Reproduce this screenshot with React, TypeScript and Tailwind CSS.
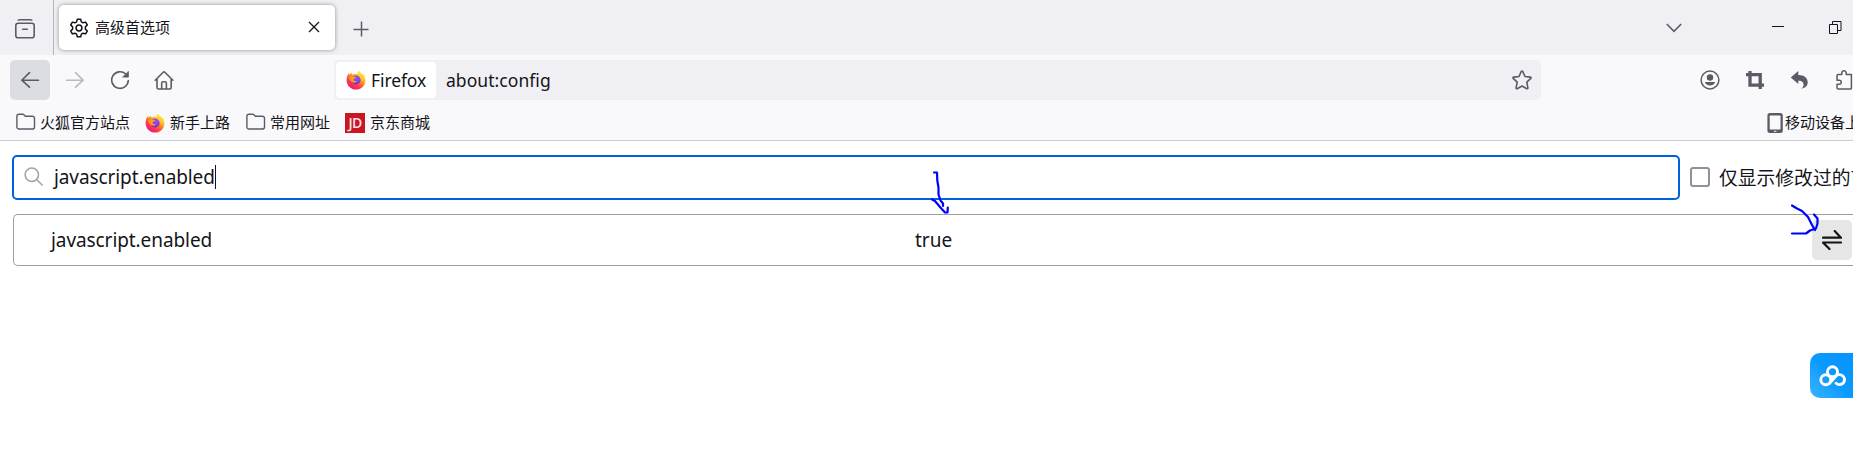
import React from "react";

type IconProps = { className?: string };

const latin = "font-['Noto_Sans','Noto_Sans_CJK_SC',sans-serif]";
const cjk = "font-['Noto_Sans_CJK_SC',sans-serif]";

function FirefoxLogo({ id }: { id: string }) {
  return (
    <svg viewBox="0 0 20 20" className="size-5 shrink-0">
      <defs>
        <linearGradient id={id + "a"} x1="0.85" y1="0.05" x2="0.25" y2="0.95">
          <stop offset="0.05" stopColor="#fff44f" />
          <stop offset="0.3" stopColor="#ffc52e" />
          <stop offset="0.52" stopColor="#ff7a22" />
          <stop offset="0.75" stopColor="#ff3750" />
          <stop offset="1" stopColor="#f0147c" />
        </linearGradient>
        <radialGradient id={id + "b"} cx="0.6" cy="0.3" r="0.75">
          <stop offset="0" stopColor="#a64bf4" />
          <stop offset="0.6" stopColor="#7542e5" />
          <stop offset="1" stopColor="#592acb" />
        </radialGradient>
      </defs>
      <path fill={"url(#" + id + "a)"} d="M13.2.6c-1.2.9-1.7 2.100-1.600 3.400C9.700 3.700 8 3.900 6.600 4.600 6 4.200 5.700 3.500 5.700 2.800 4.800 3.300 4.200 3.900 3.800 4.500 3.200 4.300 2.800 3.800 2.600 3.200 1.300 4.800.5 7.700.6 10.500.9 15.700 5 19.600 10 19.600c5.300 0 9.500-4.200 9.500-9.400 0-2.900-1.200-5.200-2.900-6.700.1.7.2 1.200.1 1.600C15.800 3.100 14 2.400 13.200.6z" />
      <circle cx="10.2" cy="10" r="4.400" fill={"url(#" + id + "b)"} />
      <path fill="#ff9a24" d="M3.400 7.200c1.500-1.200 3.100-1.300 4.300-.5 1 .1 2 .1 2.500.3-.2 1-1.100 1.500-2.100 1.900-.7.400-.5 1.200.1 1.800.8.700 1.900.5 3 .2-.7 1.500-2.400 2.200-4.100 1.700C4.700 11.900 3.200 9.700 3.400 7.200z" />
      <path fill="#ffca32" d="M12.100 4.200c3.200 1.300 4.500 4.300 3.500 7.100 1.700-1.200 2.100-3.700 1-5.900-1.200-1.200-2.500-1.800-4.500-1.200z" />
    </svg>
  );
}

function Folder() {
  return (
    <svg viewBox="0 0 20 20" className="mt-[-1px] size-5 shrink-0" fill="none" stroke="#5b5b66" strokeWidth="1.4">
      <path d="M.9 14.900V4.300a2.100 2.100 0 0 1 2.100-2.100h3.700c.5 0 .9.200 1.200.5l1.500 1.500h7a2.100 2.100 0 0 1 2.100 2.100v8.600a2.100 2.100 0 0 1-2.100 2.100H3a2.100 2.100 0 0 1-2.100-2.100z" />
    </svg>
  );
}

function Gear({ className }: IconProps) {
  return (
    <svg viewBox="0 0 20 20" className={className} fill="none" stroke="#15141a" strokeWidth="1.500" strokeLinejoin="round">
      <circle cx="10" cy="10" r="2.900" />
      <path d="M8.300 1.300h3.400l.7 2.600 1.600.9 2.600-.7 1.700 2.900-1.900 1.900v2.200l1.900 1.900-1.700 2.900-2.600-.7-1.600.9-.7 2.600H8.300l-.7-2.600-1.600-.9-2.600.7L1.700 13l1.900-1.900V8.900L1.700 7l1.700-2.900 2.600.7 1.600-.9z" />
    </svg>
  );
}

function TabBar() {
  return (
    <header className="flex h-[55px] items-center bg-[#f0f0f4]">
      <div className="flex h-full w-[54px] shrink-0 items-center border-r border-[#b5b5bb] pl-[15px]">
        <svg viewBox="0 0 20 20" className="mt-[2px] size-5" fill="none" stroke="#5b5b66" strokeWidth="1.600" strokeLinecap="round">
          <path d="M3.200 1.100C3.600.9 4.100.8 4.600.8h10.800c.5 0 1 .1 1.400.3" />
          <rect x=".8" y="4.300" width="18.400" height="14.500" rx="2.300" />
          <path d="M7.700 10.300h4.600" />
        </svg>
      </div>
      <div className="ml-[5px] flex h-[45px] w-[276px] items-center rounded-[5px] bg-white pl-[10px] shadow-[0_0_4px_rgba(0,0,0,0.4)]">
        <Gear className="size-5 shrink-0" />
        <span className={cjk + " mt-[-2px] ml-[6px] text-[15px] leading-5 text-[#15141a]"}>高级首选项</span>
        <svg viewBox="0 0 12 12" className="mt-[-1px] mr-[15px] ml-auto size-3" stroke="#15141a" strokeWidth="1.300">
          <path d="M1 1l10 10M11 1L1 11" />
        </svg>
      </div>
      <svg viewBox="0 0 16 16" className="mt-[2px] ml-[18px] size-4" stroke="#5b5b66" strokeWidth="1.500">
        <path d="M8.500 .5v15M.5 8.500h15" />
      </svg>
      <svg viewBox="0 0 16 10" className="mr-[90px] ml-auto h-[10px] w-4" fill="none" stroke="#5b5b66" strokeWidth="1.600">
        <path d="M.8 1L8 8.400 15.200 1" />
      </svg>
      <svg viewBox="0 0 12 2" className="mr-[45px] mb-[2px] h-[2px] w-3" fill="#15141a">
        <rect y="0" width="12" height="1" />
      </svg>
      <svg viewBox="0 0 13 13" className="mr-[11px] size-[13px]" fill="none" stroke="#15141a" strokeWidth="1">
        <path d="M.5 3.500h8v9h-8zM3.500 3.500v-3h8.500v9H8.500" />
      </svg>
    </header>
  );
}

function NavBar() {
  return (
    <nav className="flex h-[50px] items-center pl-[10px]">
      <div className="flex size-10 shrink-0 items-center justify-center rounded-[5px] bg-[#dcdce3]">
        <svg viewBox="0 0 20 20" className="size-5" fill="none" stroke="#5b5b66" strokeWidth="1.600" strokeLinecap="round" strokeLinejoin="round">
          <path d="M18.500 10.200H1.800M9.500 2.600L1.800 10.200l7.700 7" />
        </svg>
      </div>
      <svg viewBox="0 0 20 20" className="ml-[15px] size-5 shrink-0" fill="none" stroke="#b9b9bf" strokeWidth="1.600" strokeLinecap="round" strokeLinejoin="round">
        <path d="M1.500 10.200h16.700M10.500 2.600l7.700 7.600-7.700 7" />
      </svg>
      <svg viewBox="0 0 20 20" className="ml-[25px] size-5 shrink-0" fill="none" stroke="#5b5b66" strokeWidth="1.600" strokeLinecap="round">
        <path d="M18.300 10.500a8.300 8.300 0 1 1-2.600-6.500" />
        <path d="M18.400 1.700v5.400H13z" fill="#5b5b66" strokeWidth=".8" strokeLinejoin="round" />
      </svg>
      <svg viewBox="0 0 20 20" className="ml-[24px] size-5 shrink-0" fill="none" stroke="#5b5b66" strokeWidth="1.600" strokeLinecap="round" strokeLinejoin="round">
        <path d="M1.200 10.200l8-8c.5-.5 1.200-.5 1.700 0l8 8M3 8.800v8.600c0 .9.700 1.600 1.600 1.600h11c.9 0 1.600-.7 1.600-1.600V8.800M7.700 18.800v-5.600c0-.9.600-1.500 1.500-1.500h1.700c.9 0 1.500.6 1.500 1.500v5.600" />
      </svg>
      <div className="ml-[160px] flex h-10 w-[1207px] shrink-0 items-center rounded-[5px] bg-[#f0f0f4] p-[2px]">
        <div className="flex h-9 w-[100px] items-center rounded-[4px] bg-white pl-[10px]">
          <FirefoxLogo id="nav" />
          <span className={latin + " ml-[5px] text-[17.500px] leading-6 tracking-[-0.1px] text-[#15141a]"}>Firefox</span>
        </div>
        <span className={latin + " ml-[10px] text-[17.500px] leading-6 tracking-[0.05px] text-[#15141a]"}>about:config</span>
        <svg viewBox="0 0 20 20" className="mr-[7px] ml-auto size-5" fill="none" stroke="#5b5b66" strokeWidth="1.600" strokeLinejoin="round">
          <path d="M9.300 1.400c.3-.6 1.100-.6 1.400 0l2.300 5.100 5.300.6c.7.100.9.800.5 1.300l-4 3.800 1.100 5.700c.1.700-.5 1.100-1.100.8L10 16l-4.800 2.700c-.6.300-1.200-.1-1.100-.8l1.100-5.700-4-3.800c-.4-.5-.2-1.200.5-1.300L7 6.500z" />
        </svg>
      </div>
    </nav>
  );
}

function ToolbarButtons() {
  return (
    <div className="flex h-[50px] items-center gap-[25px]">
      <svg viewBox="0 0 20 20" className="size-5 shrink-0" fill="#5b5b66">
        <circle cx="10" cy="10" r="8.900" fill="none" stroke="#5b5b66" strokeWidth="1.500" />
        <circle cx="10" cy="7.500" r="3.200" />
        <path d="M4.900 12h10.200c-.5 2.100-2.500 3.600-5.100 3.600S5.400 14.100 4.900 12z" />
      </svg>
      <svg viewBox="0 0 20 20" className="size-5 shrink-0" fill="none" stroke="#5b5b66" strokeWidth="3.300">
        <path d="M1 4.700h14.200v14.300M5 1v14.100h14" />
      </svg>
      <svg viewBox="0 0 20 20" className="size-5 shrink-0" fill="#5b5b66">
        <path d="M.8 7.500L8.300 1v4c5.800.1 9.300 2.500 9.400 7.300.1 3.200-2.200 5.700-6.400 6.500 2.500-2 3-4.500 1.700-6.300-1-1.300-2.600-1.700-4.700-1.700V14z" />
      </svg>
      <svg viewBox="0 0 20 20" className="size-5 shrink-0" fill="none" stroke="#5b5b66" strokeWidth="1.500" strokeLinejoin="round">
        <path d="M3.200 4.600h3.600V3a2.200 2.200 0 0 1 4.400 0v1.600h5.200v13.700c0 .5-.3.700-.7.700H3.200c-.8 0-1.200-.4-1.200-1.200v-3.600h2.200a2 2 0 0 0 0-4H2V5.800c0-.8.400-1.200 1.200-1.200z" />
      </svg>
    </div>
  );
}

function BookmarkLabel({ children }: { children: React.ReactNode }) {
  return <span className={cjk + " mt-[-2px] text-[15px] leading-5 text-[#15141a]"}>{children}</span>;
}

function BookmarkBar() {
  return (
    <div className="flex h-[35px] items-center pl-4">
      <div className="flex w-[129px] shrink-0 items-center gap-1">
        <Folder />
        <BookmarkLabel>火狐官方站点</BookmarkLabel>
      </div>
      <div className="flex w-[101px] shrink-0 items-center gap-[5px]">
        <FirefoxLogo id="bookmark" />
        <BookmarkLabel>新手上路</BookmarkLabel>
      </div>
      <div className="flex w-[99px] shrink-0 items-center gap-1">
        <Folder />
        <BookmarkLabel>常用网址</BookmarkLabel>
      </div>
      <div className="flex shrink-0 items-center gap-[5px]">
        <span className="flex size-5 items-center justify-center bg-[#ca1623] pt-[1px] font-['Open_Sans',sans-serif] text-[14px] leading-[18px] font-semibold tracking-[-0.8px] text-[#fbe3e5]">JD</span>
        <BookmarkLabel>京东商城</BookmarkLabel>
      </div>
      <div className="ml-auto flex w-[88px] shrink-0 items-center whitespace-nowrap">
        <svg viewBox="0 0 20 20" className="size-5 shrink-0">
          <rect x="2.400" y="0" width="15.400" height="20" rx="2.500" fill="#5b5b66" />
          <rect x="4.700" y="2.600" width="10.800" height="13.900" rx=".7" fill="#f9f9fb" />
          <rect x="8.800" y="17.700" width="2.700" height="1.300" rx=".5" fill="#d6d6dc" />
        </svg>
        <BookmarkLabel>移动设备上</BookmarkLabel>
      </div>
    </div>
  );
}

function ConfigPage() {
  return (
    <main className={latin + " pt-[14px] pl-3 text-[20px] text-[#15141a]"}>
      <div className="flex h-[45px] items-center">
        <div className="flex h-[45px] w-[1668px] shrink-0 items-center rounded-[5px] border-2 border-[#0061e0] pl-[11px]">
          <svg viewBox="0 0 20 20" className="mt-[-1px] ml-[-1px] size-5" fill="none" stroke="#a1a1a6" strokeWidth="1.500">
            <circle cx="7.800" cy="7.800" r="6.700" />
            <path d="M12.700 12.700l6 5.800" />
          </svg>
          <span className="mt-[-2px] ml-[10px] text-[19px] leading-6 tracking-[-0.1px]">javascript.enabled</span>
          <span className="mt-[-1px] h-6 w-px bg-[#15141a]" />
        </div>
        <span className="mt-[-1px] ml-[10px] size-5 shrink-0 rounded-[3px] border-2 border-[#8f8f9d]" />
        <span className={cjk + " mt-[-2px] ml-[9px] w-[134px] text-[18.800px] leading-6 whitespace-nowrap"}>仅显示修改过的首</span>
      </div>
      <div className="mt-[14px] ml-px flex h-[52px] items-center rounded-l-[5px] border border-r-0 border-[#9e9ea0] pl-[37px]">
        <span className="w-[864px] shrink-0 text-[19px] leading-6 tracking-[-0.08px]">javascript.enabled</span>
        <span className="text-[19px] leading-6">true</span>
        <button className="mr-px ml-auto flex size-10 items-center justify-center rounded-[5px] bg-[#e6e6e6]">
          <svg viewBox="0 0 20 20" className="size-5" fill="none" stroke="#15141a" strokeWidth="2.200" strokeLinecap="round" strokeLinejoin="round">
            <path d="M1 7.700h18L12.700 1M19 12.500H1l6.500 6.500" />
          </svg>
        </button>
      </div>
    </main>
  );
}

export default function App() {
  return (
    <div className="relative h-[459px] w-[1853px] overflow-hidden bg-white">
      <TabBar />
      <section className="border-b border-[#cccccc] bg-[#f9f9fb]">
        <div className="flex">
          <div className="w-[1700px] shrink-0"><NavBar /></div>
          <ToolbarButtons />
        </div>
        <BookmarkBar />
      </section>
      <ConfigPage />
      <svg viewBox="0 0 20 46" className="pointer-events-none absolute top-[170px] left-[930px] h-[46px] w-5" fill="none" stroke="#0000ff" strokeWidth="2.200" strokeLinecap="round" strokeLinejoin="round">
        <path d="M4 2.500h3l.3 8 1.200 7v7l2 6 2.500 3v2.500M2 29.500l3 1.500 5 6 5 5.500h2.500l.3-5" />
      </svg>
      <svg viewBox="0 0 30 34" className="pointer-events-none absolute top-[203px] left-[1790px] h-[34px] w-[30px]" fill="none" stroke="#0000ff" strokeWidth="2.200" strokeLinecap="round" strokeLinejoin="round">
        <path d="M2 2.500l5 3 5 2.500 6 6 4 8 3 5M2 30.500h14l4-3 6-2 1.500-5v-5L24 11.500" />
      </svg>
      <div className="absolute top-[353px] right-0 flex h-[45px] w-[43px] items-center rounded-l-[10px] bg-linear-to-tr from-[#35b4ff] via-[#0999ff] to-[#0793ff] pl-[10px]">
        <svg viewBox="0 0 27 22" className="ml-[-1px] h-[22px] w-[27px]" fill="none" stroke="#ffffff" strokeWidth="2.900" strokeLinecap="round">
          <circle cx="13.500" cy="6.700" r="5" />
          <circle cx="6.800" cy="14.800" r="5" />
          <path d="M10.500 18.300l6.300-7a5 5 0 1 1 .3 7" />
        </svg>
      </div>
    </div>
  );
}
